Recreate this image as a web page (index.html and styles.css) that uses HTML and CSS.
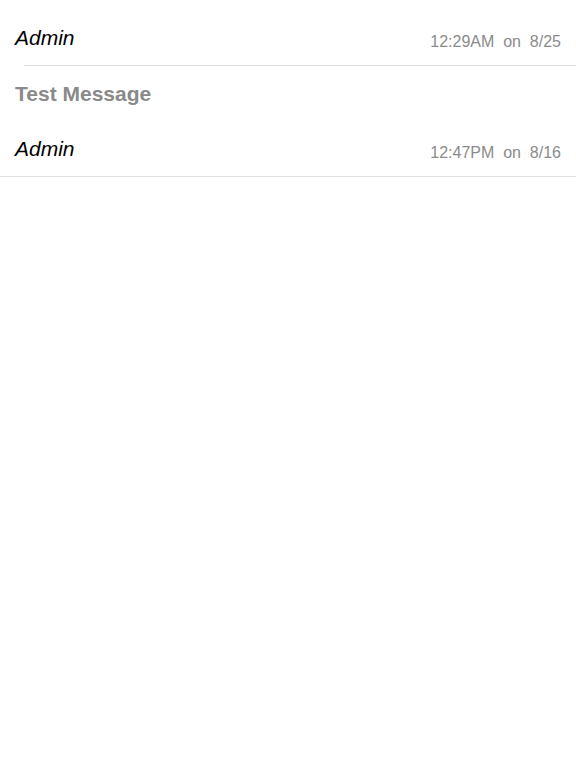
FILE: index.html
```html
<!DOCTYPE html>
<html>
<head>
<meta charset="utf-8">
<link rel="stylesheet" href="styles.css">
</head>
<body>
<div class="thread">
  <div class="header first">
    <span class="author">Admin</span>
    <span class="time">12:29AM  on  8/25</span>
  </div>
  <div class="divider inset"></div>
  <div class="message">Test Message</div>
  <div class="header second">
    <span class="author">Admin</span>
    <span class="time">12:47PM  on  8/16</span>
  </div>
  <div class="divider"></div>
</div>
</body>
</html>
```
FILE: styles.css
```css
html, body {
  margin: 0;
  padding: 0;
  background: #ffffff;
  font-family: "Liberation Sans", Arial, sans-serif;
}
.thread {
  display: flex;
  flex-direction: column;
}
.header {
  display: flex;
  justify-content: space-between;
  align-items: flex-start;
  padding: 0 15px;
}
.header.first {
  padding-top: 26px;
  padding-bottom: 14px;
}
.header.second {
  padding-top: 31px;
  padding-bottom: 14px;
}
.author {
  font-size: 21px;
  line-height: 24px;
  font-style: italic;
  color: #000;
}
.time {
  margin-top: 7px;
  font-size: 16px;
  line-height: 18px;
  color: #8b8b8b;
  white-space: pre;
}
.divider {
  height: 1px;
  background: #e0e0e0;
}
.divider.inset {
  margin-left: 24px;
}
.message {
  padding: 16px 15px 0;
  font-size: 21px;
  line-height: 24px;
  font-weight: bold;
  color: #8a8a8a;
}
```
